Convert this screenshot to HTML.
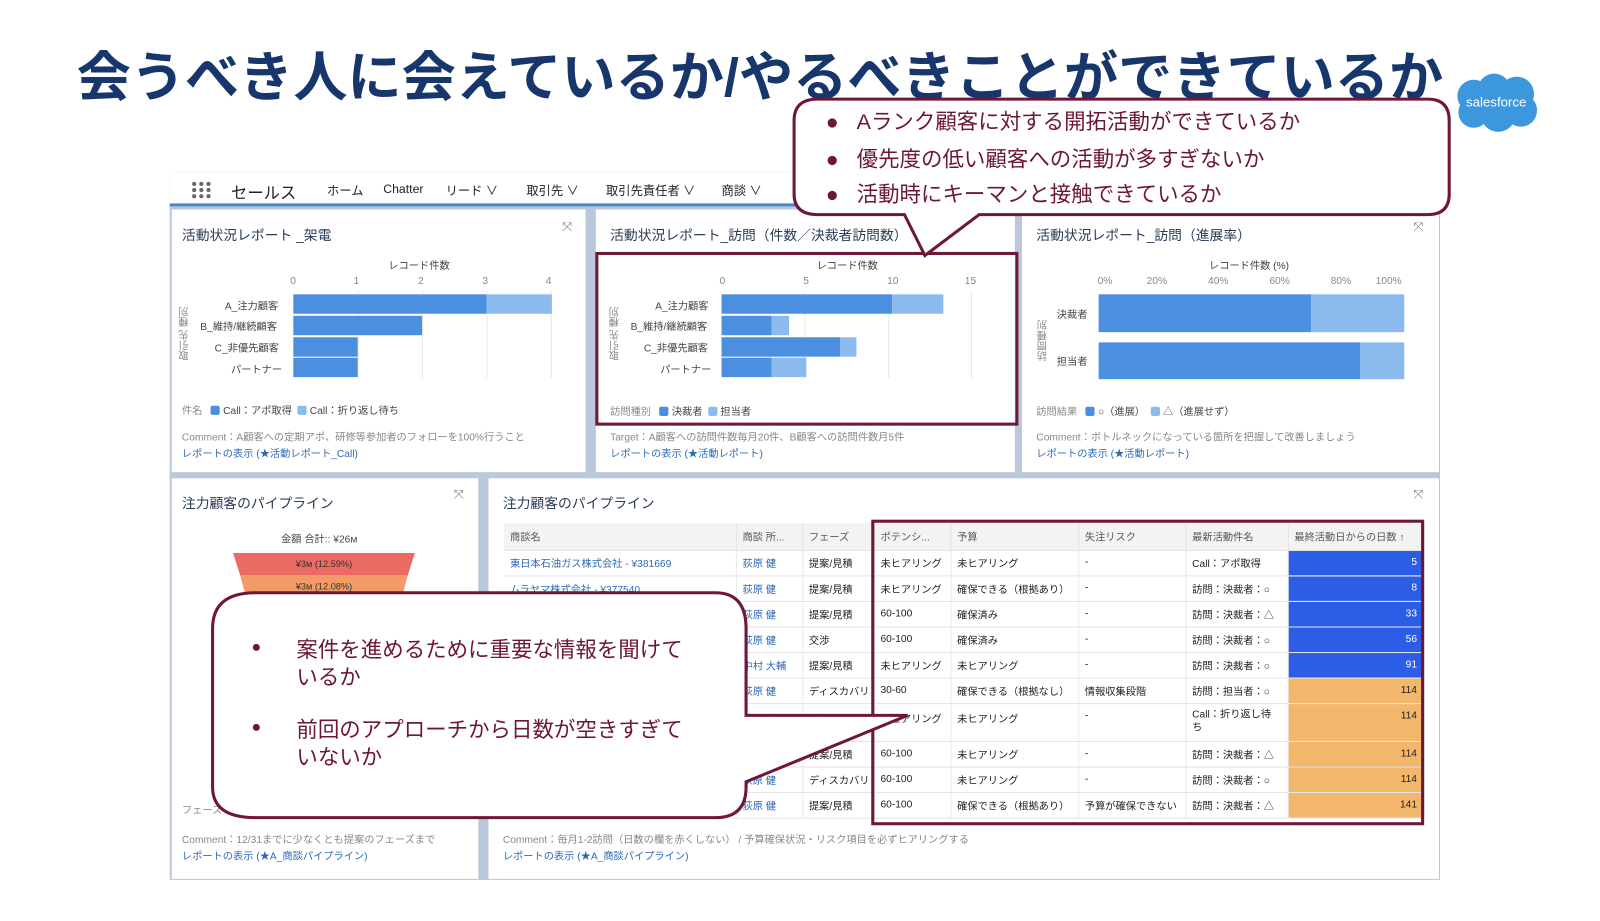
<!DOCTYPE html>
<html><head><meta charset="utf-8">
<style>
*{margin:0;padding:0;box-sizing:border-box}
body{width:1600px;height:901px;background:#fff;position:relative;overflow:hidden;font-family:"Liberation Sans","Noto Sans CJK JP",sans-serif;color:#333}
#w{position:absolute;left:0;top:0;width:1600px;height:901px;transform:scale(1.022);transform-origin:0 0}
.a{position:absolute}
.title{left:75px;top:34px;font-size:53px;font-weight:bold;color:#17366b;white-space:nowrap}
.dash{left:166px;top:168px;width:1243px;height:693px;background:#b9c8da}
.nav{left:166px;top:168px;width:1243px;height:34px;background:#fff;border-bottom:3px solid #4a86c8;font-size:12px;color:#222}
.panel{background:#fff}
.pt{font-size:13.5px;color:#2a3b55}
.sm{font-size:10px;color:#444;white-space:nowrap}
.gr{color:#888}
.lk{color:#2d6ab5}
.bar{position:absolute}
.d{background:#4c8fe0}.l{background:#8bbaee}
.grid{position:absolute;width:1px;background:#e8e8e8}
table{border-collapse:collapse;font-size:10px;color:#222}
td{border-bottom:1px solid #e3e3e3;border-right:1px solid #e8e8e8;padding:0 6px;height:25px;white-space:nowrap;overflow:hidden}
th{background:#f3f3f3;font-weight:normal;color:#555;text-align:left;padding:0 6px;height:26px;border-right:1px solid #e3e3e3;border-bottom:1px solid #ddd;white-space:nowrap}
.bl{background:#2c5de6;color:#fff;text-align:right}
.or{background:#f2b76a;color:#222;text-align:right}
.sq{display:inline-block;width:9px;height:9px;border-radius:2px;vertical-align:-1px;margin-right:3px}
.cb{font-size:21px;color:#6d1736;white-space:nowrap}
</style></head><body><div id="w">
<div class="a title">会うべき人に会えているか/やるべきことができているか</div>

<svg class="a" style="left:1422px;top:70px" width="84" height="62" viewBox="0 0 84 62">
<g fill="#3c97dd"><circle cx="20" cy="24" r="16"/><circle cx="40" cy="18" r="16"/><circle cx="62" cy="22" r="17"/><circle cx="66" cy="38" r="16"/><circle cx="44" cy="42" r="17"/><circle cx="20" cy="40" r="15"/></g>
<text x="42" y="34" text-anchor="middle" fill="#fff" font-family="Liberation Sans,sans-serif" font-size="13">salesforce</text></svg>

<div class="a dash"></div>
<div class="a nav">
<svg class="a" style="left:21px;top:9px" width="20" height="18"><g fill="#666"><circle cx="3" cy="3" r="2"/><circle cx="10" cy="3" r="2"/><circle cx="17" cy="3" r="2"/><circle cx="3" cy="9" r="2"/><circle cx="10" cy="9" r="2"/><circle cx="17" cy="9" r="2"/><circle cx="3" cy="15" r="2"/><circle cx="10" cy="15" r="2"/><circle cx="17" cy="15" r="2"/></g></svg>
<span class="a" style="left:60px;top:7px;font-size:16px;color:#222">セールス</span>
<span class="a" style="left:154px;top:10px">ホーム</span>
<span class="a" style="left:209px;top:10px">Chatter</span>
<span class="a" style="left:270px;top:10px">リード ∨</span>
<span class="a" style="left:349px;top:10px">取引先 ∨</span>
<span class="a" style="left:427px;top:10px">取引先責任者 ∨</span>
<span class="a" style="left:540px;top:10px">商談 ∨</span>
</div>

<div class="a panel" style="left:168px;top:205px;width:405px;height:257px">
<div class="a pt" style="left:10px;top:14px">活動状況レポート _架電</div>
<div class="a gr" style="left:382px;top:10px;font-size:12px">⤧</div>
<div class="a sm" style="left:212px;top:46px">レコード件数</div>
<div class="a sm gr" style="left:116px;top:65px">0</div><div class="a sm gr" style="left:178px;top:65px">1</div><div class="a sm gr" style="left:241px;top:65px">2</div><div class="a sm gr" style="left:304px;top:65px">3</div><div class="a sm gr" style="left:366px;top:65px">4</div>
<div class="grid" style="left:182px;top:80px;height:85px"></div><div class="grid" style="left:245px;top:80px;height:85px"></div><div class="grid" style="left:308px;top:80px;height:85px"></div><div class="grid" style="left:371px;top:80px;height:85px"></div>
<div class="a sm" style="left:52px;top:86px">A_注力顧客</div><div class="a sm" style="left:28px;top:106px">B_維持/継続顧客</div><div class="a sm" style="left:42px;top:127px">C_非優先顧客</div><div class="a sm" style="left:58px;top:148px">パートナー</div>
<div class="a sm gr" style="left:6px;top:95px;writing-mode:vertical-rl;transform:rotate(180deg)">取引先 種別</div>
<div class="bar d" style="left:119px;top:83px;width:189px;height:19px"></div><div class="bar l" style="left:308px;top:83px;width:64px;height:19px"></div>
<div class="bar d" style="left:119px;top:104px;width:126px;height:19px"></div>
<div class="bar d" style="left:119px;top:125px;width:63px;height:19px"></div>
<div class="bar d" style="left:119px;top:145px;width:63px;height:19px"></div>
<div class="a sm" style="left:10px;top:188px"><span class="gr">件名</span>&nbsp;&nbsp;&nbsp;<span class="sq d"></span>Call：アポ取得 &nbsp;<span class="sq l"></span>Call：折り返し待ち</div>
<div class="a sm gr" style="left:10px;top:214px">Comment：A顧客への定期アポ、研修等参加者のフォローを100%行うこと</div>
<div class="a sm lk" style="left:10px;top:230px">レポートの表示 (★活動レポート_Call)</div>
</div>

<div class="a panel" style="left:583px;top:205px;width:410px;height:257px">
<div class="a pt" style="left:14px;top:14px">活動状況レポート_訪問（件数／決裁者訪問数）</div>
<div class="a sm" style="left:216px;top:46px">レコード件数</div>
<div class="a sm gr" style="left:121px;top:65px">0</div><div class="a sm gr" style="left:203px;top:65px">5</div><div class="a sm gr" style="left:285px;top:65px">10</div><div class="a sm gr" style="left:361px;top:65px">15</div>
<div class="grid" style="left:204px;top:80px;height:85px"></div><div class="grid" style="left:286px;top:80px;height:85px"></div><div class="grid" style="left:367px;top:80px;height:85px"></div>
<div class="a sm" style="left:58px;top:86px">A_注力顧客</div><div class="a sm" style="left:34px;top:106px">B_維持/継続顧客</div><div class="a sm" style="left:47px;top:127px">C_非優先顧客</div><div class="a sm" style="left:63px;top:148px">パートナー</div>
<div class="a sm gr" style="left:12px;top:95px;writing-mode:vertical-rl;transform:rotate(180deg)">取引先 種別</div>
<div class="bar d" style="left:123px;top:83px;width:167px;height:19px"></div><div class="bar l" style="left:290px;top:83px;width:50px;height:19px"></div>
<div class="bar d" style="left:123px;top:104px;width:49px;height:19px"></div><div class="bar l" style="left:172px;top:104px;width:17px;height:19px"></div>
<div class="bar d" style="left:123px;top:125px;width:116px;height:19px"></div><div class="bar l" style="left:239px;top:125px;width:16px;height:19px"></div>
<div class="bar d" style="left:123px;top:145px;width:49px;height:19px"></div><div class="bar l" style="left:172px;top:145px;width:34px;height:19px"></div>
<div class="a sm" style="left:14px;top:189px"><span class="gr">訪問種別</span>&nbsp;&nbsp;&nbsp;<span class="sq d"></span>決裁者 &nbsp;<span class="sq l"></span>担当者</div>
<div class="a sm gr" style="left:14px;top:214px">Target：A顧客への訪問件数毎月20件、B顧客への訪問件数月5件</div>
<div class="a sm lk" style="left:14px;top:230px">レポートの表示 (★活動レポート)</div>
</div>

<div class="a panel" style="left:1000px;top:205px;width:408px;height:257px">
<div class="a pt" style="left:14px;top:14px">活動状況レポート_訪問（進展率）</div>
<div class="a gr" style="left:383px;top:10px;font-size:12px">⤧</div>
<div class="a sm" style="left:183px;top:46px">レコード件数 (%)</div>
<div class="a sm gr" style="left:74px;top:65px">0%</div><div class="a sm gr" style="left:122px;top:65px">20%</div><div class="a sm gr" style="left:182px;top:65px">40%</div><div class="a sm gr" style="left:242px;top:65px">60%</div><div class="a sm gr" style="left:302px;top:65px">80%</div><div class="a sm gr" style="left:346px;top:65px">100%</div>
<div class="a sm" style="left:34px;top:94px">決裁者</div><div class="a sm" style="left:34px;top:140px">担当者</div>
<div class="a sm gr" style="left:14px;top:108px;writing-mode:vertical-rl;transform:rotate(180deg)">訪問種別</div>
<div class="bar d" style="left:75px;top:83px;width:208px;height:37px"></div><div class="bar l" style="left:283px;top:83px;width:91px;height:37px"></div>
<div class="bar d" style="left:75px;top:130px;width:256px;height:36px"></div><div class="bar l" style="left:331px;top:130px;width:43px;height:36px"></div>
<div class="a sm" style="left:14px;top:189px"><span class="gr">訪問結果</span>&nbsp;&nbsp;&nbsp;<span class="sq d"></span>○（進展） &nbsp;<span class="sq l"></span>△（進展せず）</div>
<div class="a sm gr" style="left:14px;top:214px">Comment：ボトルネックになっている箇所を把握して改善しましょう</div>
<div class="a sm lk" style="left:14px;top:230px">レポートの表示 (★活動レポート)</div>
</div>

<div class="a panel" style="left:168px;top:468px;width:300px;height:392px">
<div class="a pt" style="left:10px;top:13px">注力顧客のパイプライン</div>
<div class="a gr" style="left:276px;top:9px;font-size:12px">⤧</div>
<div class="a sm" style="left:107px;top:51px">金額 合計:: ¥26м</div>
<svg class="a" style="left:60px;top:73px" width="180" height="60"><polygon points="0,0 178,0 171,22 7,22" fill="#ec6a64"/><polygon points="7,22 171,22 165,44 13,44" fill="#f29a68"/>
<text x="89" y="14" text-anchor="middle" font-size="9" fill="#333">¥3м (12.59%)</text><text x="89" y="36" text-anchor="middle" font-size="9" fill="#333">¥3м (12.08%)</text></svg>
<div class="a sm gr" style="left:10px;top:316px">フェーズ</div>
<div class="a sm gr" style="left:10px;top:345px">Comment：12/31までに少なくとも提案のフェーズまで</div>
<div class="a sm lk" style="left:10px;top:361px">レポートの表示 (★A_商談パイプライン)</div>
</div>

<div class="a panel" style="left:478px;top:468px;width:930px;height:392px">
<div class="a pt" style="left:14px;top:13px">注力顧客のパイプライン</div>
<div class="a gr" style="left:905px;top:9px;font-size:12px">⤧</div>
<table class="a" style="left:15px;top:44px;width:900px;table-layout:fixed">
<colgroup><col style="width:227px"><col style="width:65px"><col style="width:70px"><col style="width:75px"><col style="width:125px"><col style="width:105px"><col style="width:100px"><col style="width:133px"></colgroup>
<tr><th>商談名</th><th>商談 所...</th><th>フェーズ</th><th>ポテンシ...</th><th>予算</th><th>失注リスク</th><th>最新活動件名</th><th>最終活動日からの日数 ↑</th></tr>
<tr><td class="lk">東日本石油ガス株式会社 - ¥381669</td><td class="lk">荻原 健</td><td>提案/見積</td><td>未ヒアリング</td><td>未ヒアリング</td><td>-</td><td>Call：アポ取得</td><td class="bl">5</td></tr>
<tr><td class="lk">ムラヤマ株式会社 - ¥377540</td><td class="lk">荻原 健</td><td>提案/見積</td><td>未ヒアリング</td><td>確保できる（根拠あり）</td><td>-</td><td>訪問：決裁者：○</td><td class="bl">8</td></tr>
<tr><td></td><td class="lk">荻原 健</td><td>提案/見積</td><td>60-100</td><td>確保済み</td><td>-</td><td>訪問：決裁者：△</td><td class="bl">33</td></tr>
<tr><td></td><td class="lk">荻原 健</td><td>交渉</td><td>60-100</td><td>確保済み</td><td>-</td><td>訪問：決裁者：○</td><td class="bl">56</td></tr>
<tr><td></td><td class="lk">中村 大輔</td><td>提案/見積</td><td>未ヒアリング</td><td>未ヒアリング</td><td>-</td><td>訪問：決裁者：○</td><td class="bl">91</td></tr>
<tr><td></td><td class="lk">荻原 健</td><td>ディスカバリ</td><td>30-60</td><td>確保できる（根拠なし）</td><td>情報収集段階</td><td>訪問：担当者：○</td><td class="or">114</td></tr>
<tr><td style="height:37px"></td><td class="lk" style="vertical-align:top;padding-top:6px">荻原 健</td><td style="vertical-align:top;padding-top:6px">ディスカバリ</td><td style="vertical-align:top;padding-top:6px">未ヒアリング</td><td style="vertical-align:top;padding-top:6px">未ヒアリング</td><td style="vertical-align:top;padding-top:6px">-</td><td style="white-space:normal;vertical-align:top;padding-top:4px;line-height:13px">Call：折り返し待ち</td><td class="or" style="vertical-align:top;padding-top:6px">114</td></tr>
<tr><td></td><td class="lk">荻原 健</td><td>提案/見積</td><td>60-100</td><td>未ヒアリング</td><td>-</td><td>訪問：決裁者：△</td><td class="or">114</td></tr>
<tr><td></td><td class="lk">荻原 健</td><td>ディスカバリ</td><td>60-100</td><td>未ヒアリング</td><td>-</td><td>訪問：決裁者：○</td><td class="or">114</td></tr>
<tr><td></td><td class="lk">荻原 健</td><td>提案/見積</td><td>60-100</td><td>確保できる（根拠あり）</td><td>予算が確保できない</td><td>訪問：決裁者：△</td><td class="or">141</td></tr>
</table>
<div class="a sm gr" style="left:14px;top:345px">Comment：毎月1-2訪問（日数の欄を赤くしない） / 予算確保状況・リスク項目を必ずヒアリングする</div>
<div class="a sm lk" style="left:14px;top:361px">レポートの表示 (★A_商談パイプライン)</div>
</div>

<svg class="a" style="left:0;top:0" width="1600" height="901">
<g fill="none" stroke="#6f1738" stroke-width="3">
<rect x="584" y="248" width="411" height="167"/>
<rect x="854" y="510" width="538" height="296"/>
</g>
<path d="M800,97 H1397 Q1418,97 1418,118 V190 Q1418,210 1397,210 H958 L905,250 L885,210 H800 Q777,210 777,190 V118 Q777,97 800,97 Z" fill="#fff" stroke="#6f1738" stroke-width="3"/>
<path d="M250,580 H700 Q730,580 730,615 V700 L888,700 L730,765 V770 Q730,800 700,800 H250 Q208,800 208,770 V615 Q208,580 250,580 Z" fill="#fff" stroke="#6f1738" stroke-width="3"/>
</svg>
<div class="a cb" style="left:808px;top:103px">●&nbsp;&nbsp;&nbsp;Aランク顧客に対する開拓活動ができているか</div>
<div class="a cb" style="left:808px;top:140px">●&nbsp;&nbsp;&nbsp;優先度の低い顧客への活動が多すぎないか</div>
<div class="a cb" style="left:808px;top:174px">●&nbsp;&nbsp;&nbsp;活動時にキーマンと接触できているか</div>
<div class="a cb" style="left:246px;top:625px;font-size:16px">●</div>
<div class="a cb" style="left:290px;top:623px;line-height:27px">案件を進めるために重要な情報を聞けて<br>いるか</div>
<div class="a cb" style="left:246px;top:703px;font-size:16px">●</div>
<div class="a cb" style="left:290px;top:701px;line-height:27px">前回のアプローチから日数が空きすぎて<br>いないか</div>
</div></body></html>
